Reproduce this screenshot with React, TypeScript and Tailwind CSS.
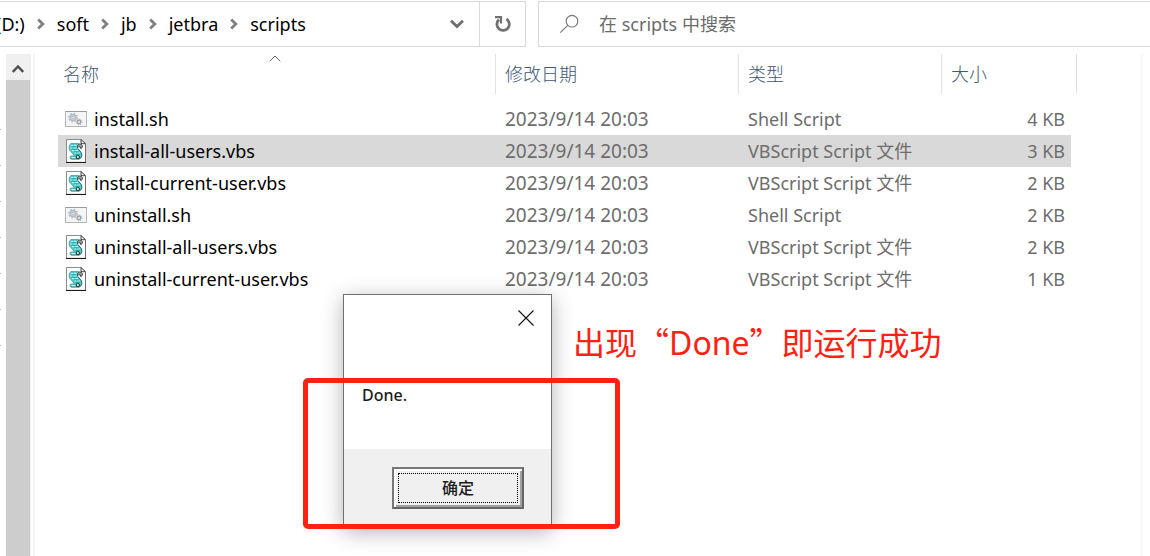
import React from "react";

type FileKind = "sh" | "vbs";

interface FileEntry {
  name: string;
  kind: FileKind;
  modified: string;
  size: string;
  selected?: boolean;
}

const files: FileEntry[] = [
  { name: "install.sh", kind: "sh", modified: "2023/9/14 20:03", size: "4 KB" },
  { name: "install-all-users.vbs", kind: "vbs", modified: "2023/9/14 20:03", size: "3 KB", selected: true },
  { name: "install-current-user.vbs", kind: "vbs", modified: "2023/9/14 20:03", size: "2 KB" },
  { name: "uninstall.sh", kind: "sh", modified: "2023/9/14 20:03", size: "2 KB" },
  { name: "uninstall-all-users.vbs", kind: "vbs", modified: "2023/9/14 20:03", size: "2 KB" },
  { name: "uninstall-current-user.vbs", kind: "vbs", modified: "2023/9/14 20:03", size: "1 KB" },
];

const typeNames: Record<FileKind, string> = {
  sh: "Shell Script",
  vbs: "VBScript Script 文件",
};

const crumbs = ["(D:)", "soft", "jb", "jetbra", "scripts"];

function CrumbArrow() {
  return (
    <svg className="h-3 w-2 shrink-0" viewBox="0 0 8 12" fill="none" stroke="#808080" strokeWidth="2.8" aria-hidden="true">
      <path d="M1.2 1.4 5.8 6 1.2 10.6" />
    </svg>
  );
}

function ShellIcon() {
  return (
    <svg className="h-4 w-[22px] shrink-0" viewBox="0 0 22 16" aria-hidden="true">
      <rect x="0.5" y="0.5" width="21" height="15" fill="#f4f5f6" stroke="#b4b7ba" />
      <path d="M0.5 0.5h21" stroke="#999da1" />
      <circle cx="8" cy="6.6" r="3.1" fill="#d5d9dd" stroke="#b3bac1" strokeWidth="1.4" />
      <circle cx="8" cy="6.6" r="4.3" fill="none" stroke="#b3bac1" strokeWidth="1.3" strokeDasharray="1.5 1.87" />
      <circle cx="8" cy="6.6" r="1.2" fill="#f4f5f6" stroke="#a3abb3" strokeWidth="0.7" />
      <circle cx="14" cy="11" r="1.8" fill="#c6cbd0" stroke="#9aa2a9" strokeWidth="1.2" />
      <circle cx="14" cy="11" r="2.8" fill="none" stroke="#9aa2a9" strokeWidth="1" strokeDasharray="1.1 1.1" />
      <circle cx="14" cy="11" r="0.7" fill="#ffffff" />
    </svg>
  );
}

function VbsIcon() {
  return (
    <svg className="h-6 w-[22px] shrink-0" viewBox="0 0 22 24" aria-hidden="true">
      <path d="M1.5 0.5H16L20.5 5V23.5H1.5Z" fill="#ffffff" />
      <path d="M1.5 23.5V0.5H16" fill="none" stroke="#8c8c8c" />
      <path d="M20.5 5V23.5" fill="none" stroke="#6f6f6f" />
      <path d="M1 23.5H21" fill="none" stroke="#1c1c1c" strokeWidth="1.2" />
      <path d="M16 0.5V4.7H20.5Z" fill="#ececec" stroke="#333333" strokeWidth="0.9" />
      <path
        d="M6 4.6H13.6C11.8 6 11.6 8 12.8 9.6L16 13.2C17.6 15.6 16.8 19.2 14 20H6.2C4.6 19.8 4.6 17.4 6.2 17H9.8L5 11.4C3.4 9.2 4 5.6 6 4.6Z"
        fill="#45d3cf"
      />
      <path d="M6 4.6H13.6M6 4.6C4 5.6 3.4 9.2 5 11.4L9.8 17H6.2C4.6 17.4 4.6 19.8 6.2 20" fill="none" stroke="#4a9a9b" strokeWidth="0.9" />
      <path d="M12.8 9.6 16 13.2C17.6 15.6 16.8 19.2 14 20H6.2" fill="none" stroke="#1f4a4c" strokeWidth="0.9" />
      <path d="M12.2 8.6C12 6.4 13.2 4.8 15 5 17.2 5.2 18 7 17 8.8L15.6 9.4 15.2 7.6 13.6 7.8Z" fill="#9fa5a5" stroke="#303838" strokeWidth="0.9" />
      <path d="M5.8 6.6h2.4M9.4 6.6h2.2M5.4 9h1.8M8.4 9h3M7.2 11.6h2M10.4 11.6h2.4M9.4 14h1.8M12.4 14h2.2M6.8 18.6h3.8" stroke="#d8fffd" strokeWidth="1.1" />
      <path d="M6 7.8h5M6.2 10.3h5.4M8.4 12.8h5M10.4 15.3h4.8" stroke="#1f999d" strokeWidth="0.8" />
      <circle cx="12.8" cy="18" r="1.7" fill="#b8eceb" stroke="#1d2c2d" strokeWidth="1" />
    </svg>
  );
}

function AddressBar() {
  return (
    <nav aria-label="地址" className="flex h-full w-[526px] shrink-0 overflow-hidden border-y border-r border-[#d9d9d9]">
      <ol className="-ml-1 flex flex-1 items-center gap-3 text-black">
        {crumbs.map((crumb, i) => (
          <li key={crumb} className="flex items-center gap-3">
            {i > 0 && <CrumbArrow />}
            <a href="#">{crumb}</a>
          </li>
        ))}
      </ol>
      <button type="button" aria-label="以前的位置" className="flex w-[45px] items-center justify-center">
        <svg className="h-[10px] w-4" viewBox="0 0 16 10" fill="none" stroke="#6e6e6e" strokeWidth="2.8" aria-hidden="true">
          <path d="M2 1.8 8 7.6l6-5.8" />
        </svg>
      </button>
      <button type="button" aria-label="刷新" className="flex w-[46px] items-center justify-center border-l border-[#d9d9d9]">
        <svg className="h-[18px] w-[18px]" viewBox="0 0 18 18" fill="none" stroke="#707070" strokeWidth="2.8" aria-hidden="true">
          <path d="M12.4 4A6.2 6.2 0 1 1 5 4.6" />
          <path d="M1 2.2H7V8.6" strokeWidth="2.2" />
        </svg>
      </button>
    </nav>
  );
}

function SearchBox() {
  return (
    <label className="flex h-full flex-1 items-center gap-5 border-y border-l border-[#d9d9d9] pl-5">
      <svg className="h-5 w-5 shrink-0" viewBox="0 0 20 20" fill="none" stroke="#7a7a7a" strokeWidth="1.2" aria-hidden="true">
        <circle cx="13" cy="7.2" r="5.8" />
        <path d="M8.8 11.4 1.2 18.6" />
      </svg>
      <input
        type="text"
        aria-label="搜索"
        placeholder="在 scripts 中搜索"
        className="min-w-0 flex-1 bg-transparent outline-none placeholder:text-[#6b6b6b] placeholder:opacity-100"
      />
    </label>
  );
}

function FileTable() {
  const head = "h-10 border-r border-[#e2e2e2] p-0 pl-[9px] text-left font-light";
  return (
    <table className="w-full table-fixed border-separate border-spacing-0">
      <colgroup>
        <col />
        <col className="w-[243px]" />
        <col className="w-[203px]" />
        <col className="w-[129px]" />
        <col className="w-[6px]" />
      </colgroup>
      <thead className="text-[#405672]">
        <tr>
          <th scope="col" aria-sort="ascending" className="relative h-10 border-r border-[#e2e2e2] p-0 pl-[5px] text-left font-light">
            名称
            <svg className="absolute top-px left-1/2 -ml-2 h-[7px] w-3" viewBox="0 0 12 7" fill="none" stroke="#666666" aria-hidden="true">
              <path d="M0.7 6.2 6 1l5.3 5.2" />
            </svg>
          </th>
          <th scope="col" className={head}>修改日期</th>
          <th scope="col" className={head}>类型</th>
          <th scope="col" colSpan={2} className={head}>大小</th>
        </tr>
        <tr aria-hidden="true">
          <td colSpan={5} className="h-[9px] p-0" />
        </tr>
      </thead>
      <tbody className="text-[#6d6d6d]">
        {files.map((file) => {
          const bg = file.selected ? "h-8 p-0 bg-[#d9d9d9]" : "h-8 p-0";
          return (
            <tr key={file.name}>
              <td className={bg}>
                <span className="flex items-center gap-[7px] pl-[7px] text-black">
                  {file.kind === "sh" ? <ShellIcon /> : <VbsIcon />}
                  {file.name}
                </span>
              </td>
              <td className={bg}>
                <span className="block pl-[9px] text-[19px] leading-6">{file.modified}</span>
              </td>
              <td className={bg}>
                <span className="pl-[9px]">{typeNames[file.kind]}</span>
              </td>
              <td className={bg}>
                <span className="block pr-[6px] text-right">{file.size}</span>
              </td>
              <td className="p-0" />
            </tr>
          );
        })}
      </tbody>
    </table>
  );
}

function DoneDialog() {
  return (
    <div
      role="dialog"
      aria-label="Done."
      className="absolute top-[294px] left-[343px] flex h-[233px] w-[209px] flex-col border border-[#707070] bg-white text-base text-[#1c1c1c] shadow-[0_5px_20px_rgba(0,0,0,0.3)]"
    >
      <div className="flex justify-end pt-[15px] pr-[17px]">
        <button type="button" aria-label="关闭" className="flex h-4 w-4 items-center justify-center">
          <svg className="h-4 w-4" viewBox="0 0 16 16" stroke="#111111" strokeWidth="1.1" aria-hidden="true">
            <path d="M0.5 0.5l15 15M15.5 0.5l-15 15" />
          </svg>
        </button>
      </div>
      <p className="flex-1 pt-[57px] pl-[18px] leading-6 font-medium">Done.</p>
      <div className="flex h-[77px] justify-end bg-[#f0f0f0] pt-[18px] pr-[27px]">
        <button
          type="button"
          className="h-[42px] w-[132px] border-2 border-t-[#777777] border-r-[#666666] border-b-[#666666] border-l-[#777777] bg-[#f0f0f0] p-1 shadow-[inset_2px_2px_0_#ffffff,inset_-2px_-2px_0_#a0a0a0]"
        >
          <span className="flex h-full items-center justify-center border border-dotted border-black leading-5 font-medium">确定</span>
        </button>
      </div>
    </div>
  );
}

export default function App() {
  return (
    <div className="relative flex min-h-screen flex-col overflow-hidden bg-white pt-px font-['Noto_Sans','Noto_Sans_CJK_SC',sans-serif] text-lg leading-6">
      <header className="flex h-[46px] gap-3">
        <AddressBar />
        <SearchBox />
      </header>

      <main className="flex flex-1 pt-[7px]">
        <div className="flex w-[6px] shrink-0 flex-col gap-[35px] pt-[75px]" aria-hidden="true">
          {[0, 1, 2, 3, 4, 5, 6].map((mark) => (
            <span key={mark} className="h-px w-px bg-[#b8b8b8]" />
          ))}
        </div>
        <div className="flex w-[25px] shrink-0 flex-col border-r border-[#f0f0f0] bg-[#cdcdcd]">
          <button type="button" aria-label="向上滚动" className="flex h-[26px] items-center justify-center bg-[#f0f0f0] pt-1">
            <svg className="h-[10px] w-3" viewBox="0 0 12 10" fill="none" stroke="#505050" strokeWidth="2.4" aria-hidden="true">
              <path d="M0.8 8 6 2.4 11.2 8" />
            </svg>
          </button>
        </div>
        <div className="ml-[2px] flex-1 border-l-2 border-[#f5f5f5] pr-[64px] pl-[23px]">
          <FileTable />
        </div>
        <div className="w-[9px] shrink-0 border-l-2 border-[#f8f8f8]" />
      </main>

      <DoneDialog />
      <div className="pointer-events-none absolute top-[378px] left-[303px] h-[151px] w-[317px] rounded-[5px] border-5 border-[#ff2212]" />
      <p className="absolute top-[321px] left-[573px] font-['Noto_Sans_CJK_SC',sans-serif] text-[32px] leading-10 whitespace-nowrap text-[#ff2212]">
        出现“<span className="font-['Noto_Sans',sans-serif]">Done</span>”即运行成功
      </p>
    </div>
  );
}
